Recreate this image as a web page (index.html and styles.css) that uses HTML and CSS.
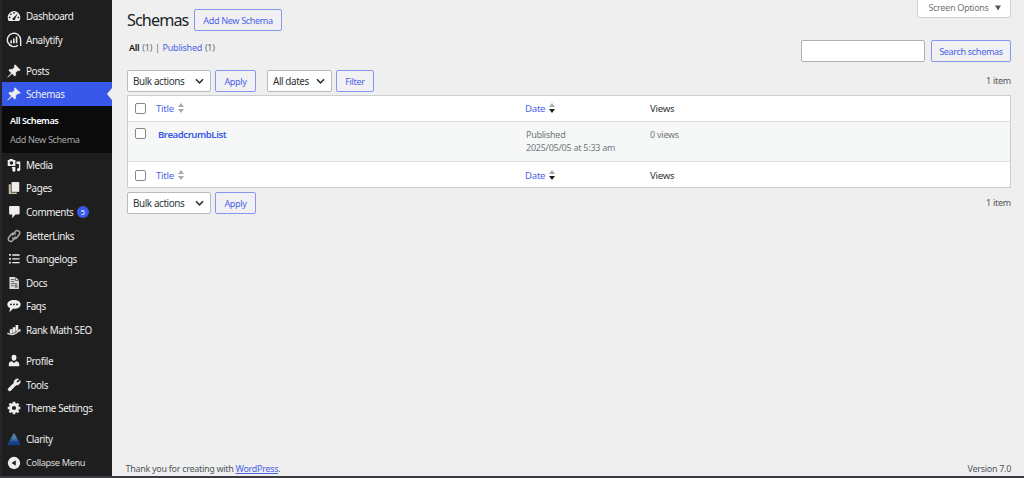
FILE: index.html
```html
<!DOCTYPE html>
<html lang="en">
<head>
<meta charset="utf-8">
<title>Schemas</title>
<link rel="stylesheet" href="styles.css">
</head>
<body>
<div class="app">
<nav class="sidebar">
  <a class="item"><svg class="icon" viewBox="0 0 20 20"><path d="M2.500 17A9 9 0 1 1 17.500 17Z"/><g fill="#1e1e1e"><circle cx="10" cy="5.500" r="1.200"/><circle cx="5.500" cy="7.500" r="1.200"/><circle cx="3.800" cy="12" r="1.200"/><circle cx="16.200" cy="12" r="1.200"/><path d="M15.500 6 11.800 13.500a2 2 0 1 1-2.300-1.500Z"/></g></svg><span>Dashboard</span></a>
  <a class="item"><svg class="icon big" viewBox="0 0 20 20"><path d="M15 16.500A8.300 8.300 0 1 1 18.300 10v7.500" fill="none" stroke="#eee" stroke-width="1.700"/><path d="M5.500 10.500h2v3.500h-2zM8.800 8h2v6h-2zM12.200 5.500h2V14h-2z"/></svg><span>Analytify</span></a>
  <a class="item gap"><svg class="icon bold" viewBox="0 0 20 20"><path d="M11.500 1 19 8.500 17.300 9.500 15.500 9.200 12.200 12.500 12.500 16 11 17.300 7.200 13.500 1 19 6.300 12.700 2.500 9 4 7.500 7.500 7.800 10.800 4.500 10.500 2.600Z"/></svg><span>Posts</span></a>
  <a class="item current"><svg class="icon bold" viewBox="0 0 20 20"><path d="M11.500 1 19 8.500 17.300 9.500 15.500 9.200 12.200 12.500 12.500 16 11 17.300 7.200 13.500 1 19 6.300 12.700 2.500 9 4 7.500 7.500 7.800 10.800 4.500 10.500 2.600Z"/></svg><span>Schemas</span></a>
  <div class="submenu"><a class="active">All Schemas</a><a>Add New Schema</a></div>
  <a class="item"><svg class="icon" viewBox="0 0 20 20"><path fill-rule="evenodd" d="M1 3h2l1-1.500h4L9 3h3v8.500H1ZM6.300 4.600a2.500 2.500 0 1 0 .1 0Z"/><path d="M13.500 5H19v11.500a2.400 2.400 0 1 1-2-2.300V8.500h-3.500ZM7 13h5v4.500a2.200 2.200 0 1 1-1.800-2.100H7Z"/></svg><span>Media</span></a>
  <a class="item"><svg class="icon" viewBox="0 0 20 20"><path d="M6.500 1.500H17.500v14H6.500Z"/><path fill="#c9bda8" d="M2.500 4.500h3v12H14v2H2.500Z"/></svg><span>Pages</span></a>
  <a class="item"><svg class="icon" viewBox="0 0 20 20"><path d="M4.500 1.500h12Q18 1.500 18 3v9q0 1.500-1.500 1.500H12l-4.500 5.500v-5.500h-3Q3 13.500 3 12V3Q3 1.500 4.500 1.500Z"/></svg><span>Comments</span><b class="badge">5</b></a>
  <a class="item"><svg class="icon" viewBox="0 0 20 20"><g fill="none" stroke="#a9a9a9" stroke-width="2.100" stroke-linecap="round"><path d="M8 8.500 12 3.500a3.500 3.500 0 0 1 5.500 4.300l-4 5a3.400 3.400 0 0 1-5.300 0"/><path d="M12 11.500 8 16.500a3.500 3.500 0 0 1-5.500-4.300l4-5a3.400 3.400 0 0 1 5.300 0"/></g></svg><span>BetterLinks</span></a>
  <a class="item"><svg class="icon" viewBox="0 0 20 20"><path d="M3 3h2.500v2.500H3zM7.500 3.300H18v1.900H7.500zM3 8.500h2.500V11H3zM7.500 8.800H18v1.900H7.500zM3 14h2.500v2.500H3zM7.500 14.300H18v1.900H7.500z"/></svg><span>Changelogs</span></a>
  <a class="item"><svg class="icon" viewBox="0 0 20 20"><path fill="#ddd" d="M3.500 1.500H12L17 6v12.500H3.500Z"/><path fill="none" stroke="#444" stroke-width="1.100" d="M5.500 5h5M5.500 8h5M12 2v4.500h4.500M5.500 11h9M5.500 14h4M11.500 13h3v3h-3z"/></svg><span>Docs</span></a>
  <a class="item"><svg class="icon" viewBox="0 0 20 20"><path d="M10 1.500c5.500 0 9.500 2.500 9.500 6.300S15.500 14 10 14q-1 0-2 0-2 4-5 4.200Q4.500 16 4.300 13C2 12 .5 10.200.5 7.800.5 4 4.500 1.500 10 1.500Z"/><g fill="#1e1e1e"><circle cx="5.700" cy="7.800" r="1.300"/><circle cx="10" cy="7.800" r="1.300"/><circle cx="14.300" cy="7.800" r="1.300"/></g></svg><span>Faqs</span></a>
  <a class="item"><svg class="icon" viewBox="0 0 20 20"><path d="M4 9h3.500v5.500L4 15.500ZM8 6h3.800v7L8 15ZM12.300 3H16v7l-3.700 3Z"/><path fill="none" stroke="#ddd" stroke-width="2" d="M.5 14.500C6 18 12 16.500 18 10"/><path d="m15.500 10 4-1.500-.5 4.500Z"/></svg><span>Rank Math SEO</span></a>
  <a class="item gap"><svg class="icon" viewBox="0 0 20 20"><path d="M10 1a3.800 3.800 0 0 1 3.500 4c0 2.800-1.500 4.700-3.500 4.700S6.500 7.800 6.500 5A3.800 3.800 0 0 1 10 1ZM7 10.500l3 2.500 3-2.500c3 .3 4.500 2 4.500 4.500v2.500h-15V15C2.500 12.500 4 10.800 7 10.500Z"/></svg><span>Profile</span></a>
  <a class="item"><svg class="icon bold" viewBox="0 0 20 20"><path d="M16.700 1.500 13.500 4.700l.4 1.600 1.700.4 3.100-3.100c1 3.200-1.200 6.800-5.700 6.400L5.500 17.700a2.200 2.200 0 0 1-3.200-3.200L10 7C9.600 3.500 12.500.5 16.700 1.500Z"/></svg><span>Tools</span></a>
  <a class="item"><svg class="icon" viewBox="0 0 20 20"><circle cx="10" cy="10" r="5" fill="none" stroke="#eee" stroke-width="4"/><path fill="none" stroke="#eee" stroke-width="3.600" d="M10 4V1M10 19v-3M4 10H1M19 10h-3M5.800 5.800 3.600 3.600M16.400 16.400l-2.200-2.200M5.800 14.200l-2.200 2.200M16.400 3.600l-2.200 2.200"/></svg><span>Theme Settings</span></a>
  <a class="item gap"><svg class="icon" viewBox="0 0 20 20"><path fill="#173d83" d="M10 1 20 19H0Z"/><path fill="#4f7f9f" d="M10 1 14.500 9 10 12 5.500 9Z"/><path fill="#2a5ba8" d="M5.500 9 10 12 14.500 9l2.500 4.500H3Z"/></svg><span>Clarity</span></a>
  <a class="item collapse"><svg class="icon" viewBox="0 0 20 20"><circle cx="10" cy="10" r="8.800"/><path fill="#1e1e1e" d="M12.500 6v8L6.500 10Z"/></svg><span>Collapse Menu</span></a>
</nav>
<main class="content">
  <header class="heading"><h1>Schemas</h1><button class="btn add">Add New Schema</button><div class="screen-options"><span>Screen Options</span><svg viewBox="0 0 6 6"><path d="M0 .5h6L3 5.500Z"/></svg></div></header>
  <div class="filters"><p><b>All</b> (1) <i>|</i> <a>Published</a> (1)</p><div class="search"><input type="text" aria-label="Search"><button class="btn">Search schemas</button></div></div>
  <div class="tablenav"><div class="select bulk"><span>Bulk actions</span><svg viewBox="0 0 10 6"><path d="m1 1 4 4 4-4"/></svg></div><button class="btn apply">Apply</button><div class="select dates"><span>All dates</span><svg viewBox="0 0 10 6"><path d="m1 1 4 4 4-4"/></svg></div><button class="btn filter">Filter</button><span class="count">1 item</span></div>
  <section class="table">
    <div class="row head"><i class="check"></i><a class="title">Title<svg class="sort" viewBox="0 0 6 10"><path d="M0 4h6L3 0ZM0 6h6L3 10Z"/></svg></a><a class="date">Date<svg class="sort" viewBox="0 0 6 10"><path d="M0 4h6L3 0Z"/><path fill="#1e1e1e" d="M0 6h6L3 10Z"/></svg></a><span>Views</span></div>
    <div class="row body"><i class="check"></i><a class="title"><b>BreadcrumbList</b></a><span class="date">Published<br>2025/05/05 at 5:33 am</span><span>0 views</span></div>
    <div class="row head foot"><i class="check"></i><a class="title">Title<svg class="sort" viewBox="0 0 6 10"><path d="M0 4h6L3 0ZM0 6h6L3 10Z"/></svg></a><a class="date">Date<svg class="sort" viewBox="0 0 6 10"><path d="M0 4h6L3 0Z"/><path fill="#1e1e1e" d="M0 6h6L3 10Z"/></svg></a><span>Views</span></div>
  </section>
  <div class="tablenav bottom"><div class="select bulk"><span>Bulk actions</span><svg viewBox="0 0 10 6"><path d="m1 1 4 4 4-4"/></svg></div><button class="btn apply">Apply</button><span class="count">1 item</span></div>
  <footer><span>Thank you for creating with <a>WordPress</a>.</span><span>Version 7.0</span></footer>
</main>
</div>
</body>
</html>
```
FILE: styles.css
```css
* { box-sizing: border-box; }
body { margin: 0; background: #efefef; font-family: "Noto Sans", "Open Sans", sans-serif; font-size: 9px; letter-spacing: -.25px; color: #50575e; }
.app { display: flex; height: 478px; border-bottom: 2px solid #3c3c40; overflow: hidden; }
a { color: #4b64e8; }
b { font-weight: 600; }
i { font-style: normal; }

.sidebar { width: 112px; flex: none; padding-top: 4.200px; background: #1e1e1e; border-left: 2px solid #26252e; }
.item { display: flex; align-items: center; height: 23.600px; padding-left: 5px; gap: 5px; color: #eee; font-size: 9.900px; letter-spacing: -.4px; white-space: nowrap; }
.item.gap { margin-top: 7.500px; }
.icon { width: 14px; height: 14px; flex: none; fill: #eee; }
.icon.big { width: 16px; height: 16px; margin: 0 -1px; }
.icon.bold { stroke: #eee; stroke-width: .9; }
.current { position: relative; background: #3858e9; }
.current::after { content: ""; position: absolute; right: 0; top: 6px; border: 6px solid transparent; border-left: 0; border-right: 5px solid #efefef; }
.submenu { height: 47px; padding: 5px 0 0 8px; background: #0b0b0b; display: flex; flex-direction: column; }
.submenu a { height: 19px; line-height: 19px; font-size: 9.100px; letter-spacing: -.35px; color: #a8a8a8; }
.submenu .active { color: #fff; font-weight: 600; letter-spacing: -.4px; }
.badge { width: 12px; height: 12px; margin-left: -1.500px; border-radius: 50%; background: #3858e9; color: #fff; font-size: 7.500px; line-height: 12px; text-align: center; font-weight: 400; letter-spacing: 0; }
.collapse { font-size: 9.200px; letter-spacing: -.35px; color: #ddd; }

.content { flex: 1; min-width: 0; display: flex; flex-direction: column; padding: 0 13px 0 15px; }
.heading { display: flex; height: 39px; }
h1 { margin: 8px 0 0; width: 67px; font-size: 16.200px; line-height: 25px; font-weight: 400; letter-spacing: -.9px; color: #1d2327; }
.btn { height: 22px; padding: 0; border: 1px solid #8498f2; border-radius: 2px; background: #f1f1f3; color: #4b64e8; font: 9.100px "Noto Sans", sans-serif; letter-spacing: -.35px; white-space: nowrap; }
.add { width: 88px; margin-top: 9px; }
.screen-options { display: flex; align-items: center; justify-content: center; gap: 6px; width: 94px; height: 18px; margin-left: auto; padding: 0 0 2px 1px; border: 1px solid #cfd0d3; border-top: 0; border-radius: 0 0 3px 3px; background: #fff; letter-spacing: -.3px; color: #72777c; }
.screen-options svg { width: 6px; height: 6px; fill: #50575e; }
.filters { display: flex; justify-content: space-between; height: 31px; }
.filters p { margin: 2px 0 0 2px; line-height: 14px; letter-spacing: -.25px; word-spacing: .8px; color: #646970; }
.filters p b { color: #111; }
.search { display: flex; gap: 6px; padding-top: 1px; }
.search input { width: 124px; height: 22px; border: 1px solid #afb1b4; border-radius: 2px; background: #fff; }
.search .btn { width: 80px; }
.tablenav { display: flex; height: 25px; align-items: flex-start; }
.select { display: flex; align-items: center; justify-content: space-between; height: 22px; padding: 0 6px 0 5px; border: 1px solid #b9bbbe; border-radius: 2px; background: #fff; color: #2c3338; font-size: 9.900px; letter-spacing: -.4px; }
.select svg { width: 9px; height: 6px; fill: none; stroke: #333; stroke-width: 1.700; }
.bulk { width: 84px; }
.dates { width: 65px; }
.apply { width: 41px; margin: 0 11px 0 4px; }
.filter { width: 38px; margin-left: 4px; }
.count { margin: 4px 0 0 auto; line-height: 13px; }
.table { border: 1px solid #cdced1; background: #fff; }
.row { display: grid; grid-template-columns: 28px 369px 125px 1fr; align-items: center; height: 25px; }
.check { width: 11px; height: 11px; margin-left: 7px; border: 1px solid #83868a; border-radius: 2px; background: #fff; }
.head { font-size: 9.600px; letter-spacing: -.25px; color: #2c3338; }
.foot { padding-top: 1px; }
.sort { width: 6px; height: 10px; margin-left: 4px; vertical-align: -1px; fill: #a7aaad; }
.body { height: 41px; padding-top: 6px; align-items: start; border-top: 1px solid #dddedf; border-bottom: 1px solid #dddedf; background: #f6f7f7; letter-spacing: -.25px; line-height: 13px; color: #72777c; }
.body .title { padding-left: 2px; font-size: 9.600px; letter-spacing: -.45px; color: #3858e9; }
.body .date { padding-left: 1px; }
.bottom { margin-top: 4px; }
footer { display: flex; justify-content: space-between; margin: auto 0 0 -1.500px; height: 15px; line-height: 15px; letter-spacing: -.3px; }
footer a { text-decoration: underline; }
```
